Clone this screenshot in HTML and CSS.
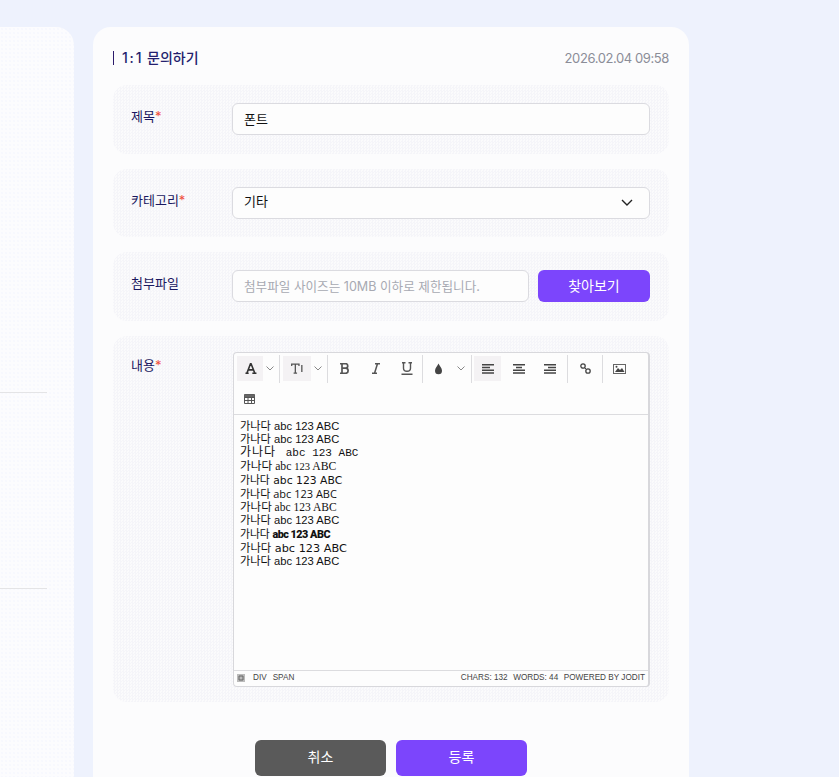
FILE: index.html
```html
<!DOCTYPE html>
<html lang="ko">
<head>
<meta charset="utf-8">
<title>1:1 문의하기</title>
<link rel="stylesheet" href="styles.css">
</head>
<body>
<div class="page">
  <aside class="side">
    <div class="side-line first"></div>
    <div class="side-line second"></div>
  </aside>
  <main class="card">
    <header class="card-head">
      <h1 class="title"><span class="title-num">1:1</span> 문의하기</h1>
      <span class="date">2026.02.04 09:58</span>
    </header>
    <section class="row">
      <div class="label">제목<span class="req">*</span></div>
      <div class="field"><div class="input">폰트</div></div>
    </section>
    <section class="row">
      <div class="label">카테고리<span class="req">*</span></div>
      <div class="field">
        <div class="input select">기타
          <svg class="select-caret" width="12" height="7" viewBox="0 0 12 7"><path d="M1 1l5 5 5-5" fill="none" stroke="#222" stroke-width="1.4"/></svg>
        </div>
      </div>
    </section>
    <section class="row">
      <div class="label">첨부파일</div>
      <div class="field file">
        <div class="input placeholder">첨부파일 사이즈는 10MB 이하로 제한됩니다.</div>
        <button class="btn browse">찾아보기</button>
      </div>
    </section>
    <section class="row content">
      <div class="label">내용<span class="req">*</span></div>
      <div class="editor">
        <div class="toolbar">
          <div class="tb-row">
            <span class="tb w26 on"><svg width="13" height="11" viewBox="0 0 14 12"><path d="M1.5 11.3h3.500M9 11.300h4.500M3 11.300L7 .8h.6l4.200 10.500M4.500 7.500h5.500" fill="none" stroke="#333" stroke-width="1.700"/></svg></span>
            <span class="caret w16"><svg width="8" height="5" viewBox="0 0 8 5"><path d="M.5.5L4 4 7.500.5" fill="none" stroke="#888"/></svg></span>
            <span class="sep"></span>
            <span class="tb w28 on ml3"><svg width="13" height="11" viewBox="0 0 15 12"><path d="M.8 3V1h8.400v2M5 1v10.300M3 11.300h4M12.500 2v8" fill="none" stroke="#555" stroke-width="1.500"/></svg></span>
            <span class="caret w16"><svg width="8" height="5" viewBox="0 0 8 5"><path d="M.5.5L4 4 7.500.5" fill="none" stroke="#888"/></svg></span>
            <span class="sep"></span>
            <span class="tb w31 ml1"><svg width="10" height="11" viewBox="0 0 10 11"><path d="M0 .7h5.500c3 0 3 4.300 0 4.500 3.500 0 3.500 5 0 5.100H0M2 .7v9.600M2 5.200h3.500" fill="none" stroke="#555" stroke-width="1.700"/></svg></span>
            <span class="tb w31"><svg width="8" height="11" viewBox="0 0 8 11"><path d="M3 .7h5M0 10.300h5M5.500.7l-3 9.600" fill="none" stroke="#555" stroke-width="1.500"/></svg></span>
            <span class="tb w31"><svg width="12" height="13" viewBox="0 0 12 13"><path d="M1 .7h3.500M7.500.7H11M2.500.7v5.500c0 4 7 4 7 0V.7M.5 12.300h11" fill="none" stroke="#555" stroke-width="1.400"/></svg></span>
            <span class="sep"></span>
            <span class="tb w30"><svg width="9" height="12" viewBox="0 0 9 12"><path d="M4.500.5C3.500 3 1 5 1 7.700a3.500 3.500 0 0 0 7 0C8 5 5.500 3 4.500.5z" fill="#444"/></svg></span>
            <span class="caret w18"><svg width="8" height="5" viewBox="0 0 8 5"><path d="M.5.5L4 4 7.500.5" fill="none" stroke="#888"/></svg></span>
            <span class="sep"></span>
            <span class="tb w27 on ml2"><svg width="12" height="10" viewBox="0 0 12 10"><path d="M0 .8h12M0 3.500h8M0 6.200h12M0 9h12" fill="none" stroke="#444" stroke-width="1.400"/></svg></span>
            <span class="tb w30 ml3"><svg width="12" height="10" viewBox="0 0 12 10"><path d="M0 .8h12M3 3.500h6M0 6.200h12M0 9h12" fill="none" stroke="#444" stroke-width="1.400"/></svg></span>
            <span class="tb w30 ml1"><svg width="12" height="10" viewBox="0 0 12 10"><path d="M0 .8h12M4 3.500H12M0 6.200h12M0 9h12" fill="none" stroke="#444" stroke-width="1.400"/></svg></span>
            <span class="sep ml2"></span>
            <span class="tb w34"><svg width="11" height="11" viewBox="0 0 11 11"><circle cx="3" cy="3" r="2.200" fill="none" stroke="#444" stroke-width="1.300"/><circle cx="8" cy="8" r="2.200" fill="none" stroke="#444" stroke-width="1.300"/><path d="M4.500 4.500l2 2" stroke="#444"/></svg></span>
            <span class="sep"></span>
            <span class="tb w33"><svg width="13" height="10" viewBox="0 0 13 10"><rect x=".5" y=".5" width="12" height="9" fill="none" stroke="#666"/><path d="M2 8l3-4 2 2 2-2 2.500 4z" fill="#444"/><circle cx="3.500" cy="2.800" r="1" fill="#444"/></svg></span>
          </div>
          <div class="tb-row">
            <span class="tb w30 table-btn"><svg width="11" height="10" viewBox="0 0 11 10"><path d="M.5.5h10v9H.5zM.5 3.500h10M.5 6.500h10M4 .5v9M7.500.5v9" fill="none" stroke="#555"/><path d="M.5.500h10V3H.5z" fill="#666"/></svg></span>
          </div>
        </div>
        <div class="body-text">
          <div class="l f-arial">가나다 abc 123 ABC</div>
          <div class="l f-helv">가나다 abc 123 ABC</div>
          <div class="l f-mono"><span class="ko-wide">가나다</span> abc 123 ABC</div>
          <div class="l f-georgia">가나다 abc <span class="oldnum">123</span> ABC</div>
          <div class="l f-tahoma">가나다 abc 123 ABC</div>
          <div class="l f-trebuchet">가나다 abc 123 ABC</div>
          <div class="l f-times">가나다 abc 123 ABC</div>
          <div class="l f-helv2">가나다 abc 123 ABC</div>
          <div class="l f-impact">가나다 <span class="heavy">abc 123 ABC</span></div>
          <div class="l f-verdana">가나다 abc 123 ABC</div>
          <div class="l f-arial">가나다 abc 123 ABC</div>
        </div>
        <div class="status">
          <svg class="grip" width="8" height="8" viewBox="0 0 8 8"><rect width="8" height="8" fill="#bbb"/><path d="M2 2h4v4H2z" fill="none" stroke="#666"/></svg>
          <span class="crumb">DIV</span>
          <span class="crumb">SPAN</span>
          <span class="status-right">
            <span>CHARS: 132</span>
            <span>WORDS: 44</span>
            <span>POWERED BY JODIT</span>
          </span>
        </div>
      </div>
    </section>
    <footer class="actions">
      <button class="btn cancel">취소</button>
      <button class="btn submit">등록</button>
    </footer>
  </main>
</div>
</body>
</html>
```

FILE: styles.css
```css
* { box-sizing: border-box; }
html, body { margin: 0; height: 100%; overflow: hidden; }
body {
  background: #eef2fd;
  font-family: Inter, "Noto Sans CJK KR", sans-serif;
  color: #111;
}
.page {
  display: flex;
  gap: 19px;
  padding-top: 27px;
  height: 777px;
  overflow: hidden;
}
.side {
  width: 74px;
  flex: none;
  background-color: #fcfcfe;
  background-image: radial-gradient(circle, #f7f8fe 0.7px, transparent 0.8px);
  background-size: 4px 4px;
  border-radius: 0 18px 0 0;
  display: flex;
  flex-direction: column;
}
.side-line { width: 47px; height: 1px; background: #e4e4e6; }
.side-line.first { margin-top: 365px; }
.side-line.second { margin-top: 195px; }
.card {
  width: 596px;
  flex: none;
  background: #fcfcfd;
  border-radius: 18px 18px 0 0;
  padding: 20px 20px 0;
  height: 800px;
}
.card-head {
  display: flex;
  justify-content: space-between;
  align-items: center;
  height: 22px;
  margin-bottom: 16px;
}
.title {
  margin: 0;
  font-size: 14px;
  line-height: 14px;
  font-weight: 500;
  color: #241f6e;
  border-left: 1px solid #2b1a6b;
  padding-left: 8px;
  white-space: nowrap;
}
.title-num { letter-spacing: 1.800px; }
.date { font-size: 13px; letter-spacing: -0.400px; color: #8b8d98; }
.row {
  display: flex;
  background: repeating-conic-gradient(#f5f5f9 0 25%, #fbfbfc 0 50%) 0 0 / 3px 3px;
  border-radius: 14px;
  padding: 18px 19px 18.5px 18px;
  margin-bottom: 15px;
}
.label {
  width: 101px;
  flex: none;
  font-size: 13px;
  font-weight: 400;
  color: #1a1860;
  line-height: 27px;
}
.req { color: #f0503c; }
.field { flex: 1; display: flex; gap: 9px; min-width: 0; }
.input {
  flex: 1;
  height: 32px;
  background: #fdfdfd;
  border: 1px solid #dbdbe0;
  border-radius: 6px;
  padding: 0 11px 2px;
  font-size: 13px;
  font-weight: 400;
  color: #111;
  display: flex;
  justify-content: space-between;
  align-items: center;
}
.select { padding-bottom: 4px; }
.select-caret { margin: 4px 5px 0 0; }
.placeholder { color: #a7a9b2; font-weight: 400; font-size: 12.600px; }
.file .input { flex: none; width: 297px; }
.btn {
  border: 0;
  border-radius: 6px;
  color: #fff;
  font-family: inherit;
  font-size: 14px;
  font-weight: 400;
  height: 32px;
  padding: 0 0 3px;
}
.browse { width: 112px; background: #7c45fc; }
.content { height: 366px; padding-top: 16px; padding-bottom: 15px; margin-bottom: 38px; }
.editor {
  flex: none;
  width: 417px;
  margin-left: 1px;
  border-style: solid;
  border-color: #d8d8dc;
  border-width: 1.500px 2px 1.500px 1.500px;
  border-radius: 4px;
  background: #fdfdfd;
  display: flex;
  flex-direction: column;
}
.toolbar { border-bottom: 1px solid #dcdcdf; height: 62px; padding: 3px 0 0 3px; }
.tb-row { display: flex; align-items: center; height: 26px; }
.tb-row + .tb-row { margin-top: 3px; height: 28px; }
.tb { display: flex; align-items: center; justify-content: center; height: 25px; }
.tb.on { background: #f4f2f4; }
.caret { display: flex; align-items: center; justify-content: center; height: 25px; padding-right: 3px; }
.sep { width: 1px; height: 28px; background: #dcdcdf; flex: none; }
.w26 { width: 26px; } .w27 { width: 27px; } .w28 { width: 28px; } .w30 { width: 30px; }
.w31 { width: 31px; } .w33 { width: 33px; } .w34 { width: 34px; }
.w16 { width: 16px; } .w18 { width: 18px; }
.ml1 { margin-left: 1px; } .ml2 { margin-left: 2px; } .ml3 { margin-left: 3px; }
.table-btn { margin-left: -3px; }
.body-text { flex: 1; padding: 5px 6px; color: #111; }
.l { font-size: 11.200px; line-height: 13.570px; white-space: nowrap; }
.f-arial { font-family: "Liberation Sans", "Noto Sans CJK KR", sans-serif; }
.f-helv { font-family: "Liberation Sans", "Noto Sans CJK KR", sans-serif; }
.f-helv2 { font-family: "Liberation Sans", "Noto Sans CJK KR", sans-serif; }
.f-mono { font-family: "Liberation Mono", "Noto Sans CJK KR", monospace; font-size: 11px; }
.ko-wide { font-size: 12px; letter-spacing: 1px; margin-right: 3px; }
.f-georgia { font-family: "Liberation Serif", "Noto Sans CJK KR", serif; font-size: 11.700px; }
.oldnum { font-size: 10.500px; }
.f-tahoma { font-family: "DejaVu Sans", "Noto Sans CJK KR", sans-serif; font-size: 10.800px; }
.f-trebuchet { font-family: "Open Sans", "Noto Sans CJK KR", sans-serif; font-size: 11px; }
.f-times { font-family: "Liberation Serif", "Noto Sans CJK KR", serif; font-size: 11.500px; }
.f-impact { font-family: "Roboto", "Noto Sans CJK KR", sans-serif; font-size: 10.800px; }
.heavy { font-weight: 900; letter-spacing: -0.500px; }
.f-verdana { font-family: "DejaVu Sans", "Noto Sans CJK KR", sans-serif; font-size: 11.300px; }
.status {
  height: 16px;
  border-top: 1px solid #dcdcdf;
  display: flex;
  align-items: center;
  font-family: "Liberation Sans", sans-serif;
  font-size: 8.200px;
  color: #444;
  padding: 0 3px 2px 3px;
}
.grip { margin: 2px 8px 0 0; }
.crumb { margin-right: 6px; }
.status-right { margin-left: auto; display: flex; gap: 5.500px; }
.actions { display: flex; justify-content: center; gap: 10px; }
.cancel, .submit { width: 131px; height: 36px; font-size: 14px; }
.cancel { background: #5a5a5a; }
.submit { background: #7c45fc; }
```
